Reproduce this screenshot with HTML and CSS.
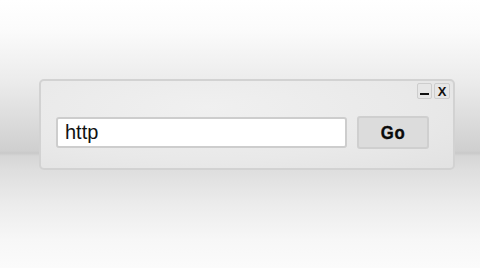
FILE: index.html
```html
<!DOCTYPE html>
<html>
<head>
<meta charset="utf-8">
<link rel="stylesheet" href="styles.css">
</head>
<body>
<div class="stage">
  <div class="panel">
    <div class="titlebar">
      <span class="winbtn min"><span class="bar"></span></span>
      <span class="winbtn close">X</span>
    </div>
    <div class="row">
      <div class="field">http</div>
      <div class="go"><span class="go-label">Go</span></div>
    </div>
  </div>
</div>
</body>
</html>
```
FILE: styles.css
```css
html, body {
  margin: 0;
  padding: 0;
}
body {
  width: 480px;
  height: 268px;
  overflow: hidden;
  background: linear-gradient(to bottom,
    #ffffff 0px,
    #fbfbfb 30px,
    #ececec 80px,
    #dcdcdc 120px,
    #cfcfcf 151px,
    #c9c9c9 153px,
    #d6d6d6 156px,
    #dedede 170px,
    #ececec 205px,
    #f7f7f7 240px,
    #fbfbfb 268px);
  font-family: "Liberation Sans", Arial, sans-serif;
}
.stage {
  padding-top: 79px;
  padding-left: 39px;
}
.panel {
  box-sizing: border-box;
  width: 416px;
  height: 91px;
  border: 2px solid #d2d2d2;
  border-radius: 5px;
  background: radial-gradient(ellipse at 40% 30%, #f0f0f0 0%, #e9e9e9 60%, #e2e2e2 100%);
  padding: 2px 3px 0 15px;
}
.titlebar {
  display: flex;
  justify-content: flex-end;
  gap: 2px;
  height: 16px;
}
.winbtn {
  box-sizing: border-box;
  width: 16px;
  height: 16px;
  border: 1px solid #cdcdcd;
  border-radius: 2px;
  background: #e6e6e6;
  display: flex;
  align-items: center;
  justify-content: center;
  color: #111;
  line-height: 1;
}
.min {
  width: 15px;
  align-items: flex-end;
  padding-bottom: 3px;
}
.bar {
  width: 9px;
  height: 2px;
  background: #111;
}
.close {
  font-family: "Liberation Sans", Arial, sans-serif;
  font-size: 13px;
  font-weight: bold;
}
.row {
  display: flex;
  align-items: center;
  gap: 10px;
  margin-top: 17px;
}
.field {
  box-sizing: border-box;
  width: 291px;
  height: 31px;
  background: #ffffff;
  border: 2px solid #cdcdcd;
  border-radius: 3px;
  padding-left: 7px;
  font-size: 20px;
  line-height: 27px;
  color: #111;
}
.go {
  box-sizing: border-box;
  width: 72px;
  height: 33px;
  background: #dcdcdc;
  border: 2px solid #cfcfcf;
  border-radius: 3px;
  display: flex;
  align-items: center;
  justify-content: center;
  font-family: "Liberation Sans", Arial, sans-serif;
  font-weight: bold;
  font-size: 19px;
  color: #0a0a0a;
  letter-spacing: 1px;
}
.go-label {
  display: inline-block;
  transform: scaleX(0.88);
  -webkit-text-stroke: 0.4px #0a0a0a;
}
```
